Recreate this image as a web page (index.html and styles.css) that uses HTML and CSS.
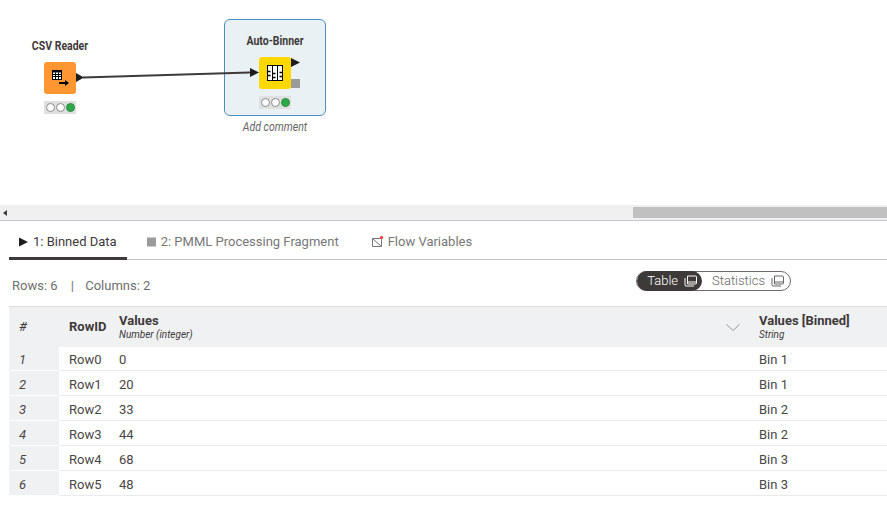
FILE: index.html
```html
<!doctype html>
<html>
<head>
	<title>Auto-Binner</title>
	<link rel="stylesheet" href="styles.css">
</head>
<body>
	<div class="canvas">
		<!-- connector between the two nodes -->
		<svg class="wire" width="887" height="205">
			<path d="M83 77.5 L250 72.5" stroke="#3e3a39" stroke-width="2" fill="none"/>
			<path d="M76 73 L84 77.5 L76 82 Z" fill="#1f1d1c"/>
			<path d="M250 68 L259 72.5 L250 77 Z" fill="#1f1d1c"/>
		</svg>

		<div class="node-label reader-label">CSV Reader</div>
		<div class="node-icon reader-icon">
			<svg width="32" height="32" viewBox="0 0 32 32">
				<rect x="8.5" y="8.5" width="9" height="9" fill="#fff" stroke="#000"/>
				<path d="M8 9.5H18" stroke="#000" stroke-width="2"/>
				<path d="M8.5 12.5H17.5M8.5 14.5H17.5M11.5 10.5V17.5M14.5 10.5V17.5" stroke="#000" fill="none"/>
				<path d="M15 21H22" stroke="#000" stroke-width="2"/>
				<path d="M21 18L25 21L21 24Z" fill="#000"/>
			</svg>
		</div>
		<div class="lights reader-lights"><i></i><i></i><i class="on"></i></div>

		<div class="selected-box"></div>
		<div class="node-label binner-label">Auto-Binner</div>
		<div class="node-icon binner-icon">
			<svg width="32" height="32" viewBox="0 0 32 32">
				<rect x="8" y="8" width="16" height="16" fill="#000"/>
				<path d="M9 9H13V23H9ZM14 9H18V23H14ZM19 9H23V23H19Z" fill="#fff"/>
				<path d="M9 14.5H11.5M9 18.5H11.5M14 16.5H16.5M14 20.5H16.5M20.5 15.5H23M20.5 19.5H23" stroke="#000" stroke-width="1.4" fill="none"/>
			</svg>
		</div>
		<svg class="binner-ports" width="12" height="32" viewBox="0 0 12 32">
			<path d="M1 1L10 5.5L1 10Z" fill="#1f1d1c"/>
			<rect x="1" y="22" width="9" height="9" fill="#9b9b9b"/>
		</svg>
		<div class="lights binner-lights"><i></i><i></i><i class="on"></i></div>
		<div class="add-comment">Add comment</div>
	</div>

	<div class="scrollbar">
		<span class="scroll-arrow"></span>
		<span class="scroll-thumb"></span>
	</div>

	<div class="tabs">
		<div class="tab active">
			<svg width="10" height="10" viewBox="0 0 10 10"><path d="M0 0.5L9 5L0 9.5Z" fill="#1f1d1c"/></svg>
			1: Binned Data
		</div>
		<div class="tab">
			<svg width="10" height="10" viewBox="0 0 10 10"><rect x="0" y="0.5" width="9" height="9" fill="#9b9b9b"/></svg>
			2: PMML Processing Fragment
		</div>
		<div class="tab tab-vars">
			<svg width="13" height="13" viewBox="0 0 13 13">
				<path d="M1.5 3.5H10.5V11.5H1.5Z" fill="none" stroke="#777" />
				<path d="M2 4L10 11" stroke="#777" fill="none"/>
				<circle cx="10.5" cy="2.5" r="1.7" fill="#ff4b4b"/>
			</svg>
			Flow Variables
		</div>
	</div>

	<div class="toolbar">
		<div class="counts">Rows: 6 <span class="sep">|</span> Columns: 2</div>
		<div class="toggle">
			<div class="toggle-item current">Table
				<svg width="13" height="12" viewBox="0 0 13 12"><path d="M3.5 1H11.5A1 1 0 0 1 12.5 2V8A1 1 0 0 1 11.5 9H3.5V1ZM1 3V10A1 1 0 0 0 2 11H10" fill="none" stroke="#fff"/><path d="M3.5 7H12.5" stroke="#fff"/></svg>
			</div>
			<div class="toggle-item">Statistics
				<svg width="13" height="12" viewBox="0 0 13 12"><path d="M3.5 1H11.5A1 1 0 0 1 12.5 2V8A1 1 0 0 1 11.5 9H3.5V1ZM1 3V10A1 1 0 0 0 2 11H10" fill="none" stroke="#666"/><path d="M3.5 7H12.5" stroke="#666"/></svg>
			</div>
		</div>
	</div>

	<table class="data">
		<colgroup>
			<col class="col-index"><col class="col-id"><col class="col-values"><col>
		</colgroup>
		<thead>
			<tr>
				<th class="index">#</th>
				<th class="plain">RowID</th>
				<th>
					<div class="head-cell">
						<div>Values<small>Number (integer)</small></div>
						<svg width="14" height="8" viewBox="0 0 14 8"><path d="M0.5 0.5L7 6.5L13.5 0.5" fill="none" stroke="#999"/></svg>
					</div>
				</th>
				<th>Values [Binned]<small>String</small></th>
			</tr>
		</thead>
		<tbody>
			<tr><td class="index">1</td><td>Row0</td><td>0</td><td>Bin 1</td></tr>
			<tr><td class="index">2</td><td>Row1</td><td>20</td><td>Bin 1</td></tr>
			<tr><td class="index">3</td><td>Row2</td><td>33</td><td>Bin 2</td></tr>
			<tr><td class="index">4</td><td>Row3</td><td>44</td><td>Bin 2</td></tr>
			<tr><td class="index">5</td><td>Row4</td><td>68</td><td>Bin 3</td></tr>
			<tr><td class="index">6</td><td>Row5</td><td>48</td><td>Bin 3</td></tr>
		</tbody>
	</table>
</body>
</html>
```

FILE: styles.css
```css
html, body {
	margin: 0;
	padding: 0;
	height: 518px;
	overflow: hidden;
}

body {
	background-color: #fff;
	color: #4a4645;
	font-family: Roboto, sans-serif;
	font-size: 13px;
}

/* workflow canvas, nodes sit at free coordinates */
.canvas {
	position: relative;
	height: 205px;
}

.wire {
	position: absolute;
	left: 0;
	top: 0;
	z-index: 2;
}

.selected-box {
	position: absolute;
	left: 224px;
	top: 19px;
	width: 100px;
	height: 95px;
	background-color: #e9f1f5;
	border: 1px solid #4a90bf;
	border-radius: 6px;
}

.node-label {
	position: absolute;
	width: 100px;
	text-align: center;
	font-size: 12px;
	font-weight: 700;
	line-height: 14px;
	color: #3e3a39;
	transform: scaleX(0.875);
}

.reader-label { left: 10px; top: 39px; }
.binner-label { left: 225px; top: 34px; }

.node-icon {
	position: absolute;
	width: 32px;
	height: 32px;
	border-radius: 3px;
}

.reader-icon { left: 44px; top: 62px; background-color: #ff9632; }
.binner-icon { left: 259px; top: 57px; background-color: #ffd800; }

.binner-ports {
	position: absolute;
	left: 290px;
	top: 57px;
}

.lights {
	position: absolute;
	display: flex;
	gap: 1px;
	align-items: center;
	justify-content: center;
	width: 32px;
	height: 13px;
	background-color: #dfe0e0;
}

.lights i {
	display: block;
	box-sizing: border-box;
	width: 9px;
	height: 9px;
	border-radius: 50%;
	background-color: #fff;
	border: 1px solid #8a8a8a;
}

.lights i.on {
	background-color: #2fa84a;
	border-color: #2a8f42;
}

.reader-lights { left: 44px; top: 101px; }
.binner-lights { left: 259px; top: 96px; }

.add-comment {
	position: absolute;
	left: 225px;
	top: 120px;
	width: 100px;
	text-align: center;
	font-size: 12px;
	font-style: italic;
	line-height: 14px;
	color: #666;
	transform: scaleX(0.88);
}

/* scrollbar under the canvas */
.scrollbar {
	display: flex;
	justify-content: space-between;
	align-items: center;
	box-sizing: border-box;
	height: 16px;
	background-color: #f0f0f0;
	border-bottom: 1px solid #c4c6ca;
}

.scroll-arrow {
	width: 0;
	height: 0;
	margin-left: 3px;
	border-style: solid;
	border-width: 3.5px 4px 3.5px 0;
	border-color: transparent #3e3a39 transparent transparent;
}

.scroll-thumb {
	width: 254px;
	height: 11px;
	margin-bottom: 1px;
	background-color: #c0c0c0;
}

.tabs {
	display: flex;
	height: 38px;
	margin-left: 9px;
	border-bottom: 1px solid #c4c4c4;
}

.tab {
	display: flex;
	align-items: center;
	gap: 4px;
	box-sizing: border-box;
	height: 39px;
	padding: 2px 10px 0;
	margin-right: 10px;
	color: #777;
	font-size: 13px;
}

.tab.active {
	color: #3e3a39;
	border-bottom: 3px solid #3e3a39;
	padding-top: 5px;
}

.tab-vars {
	margin-left: 2px;
}

.toolbar {
	display: flex;
	justify-content: space-between;
	align-items: center;
	height: 46px;
	padding-left: 12px;
	padding-right: 96px;
}

.counts {
	color: #6e6e6e;
	font-size: 13px;
	margin-top: 5px;
}

.counts .sep {
	margin: 0 8px 0 10px;
}

.toggle {
	display: flex;
	box-sizing: border-box;
	height: 20px;
	margin-top: -5px;
	border: 1px solid #6e6a69;
	border-radius: 10px;
	color: #666;
	font-size: 13px;
	font-weight: 300;
}

.toggle-item {
	display: flex;
	align-items: center;
	gap: 6px;
	padding: 0 6px 0 10px;
	border-radius: 10px;
}

.toggle-item.current {
	background-color: #3e3a39;
	color: #fff;
	margin: -1px 0 -1px 0;
	padding-right: 5px;
}

.data {
	width: 878px;
	margin-left: 9px;
	border-collapse: separate;
	border-spacing: 0;
	table-layout: fixed;
	font-size: 13px;
}

.col-index, .col-id { width: 50px; }
.col-values { width: 640px; }

.data th {
	box-sizing: border-box;
	height: 41px;
	padding: 0 0 0 10px;
	text-align: left;
	font-weight: 700;
	color: #3e3a39;
	background-color: #f0f1f3;
	border-top: 1px solid #dcdcdc;
	line-height: 13px;
}

.data th small {
	display: block;
	margin-top: 1px;
	font-size: 10px;
	font-style: italic;
	font-weight: 400;
	line-height: 13px;
}

.data th.index {
	font-weight: 400;
	font-style: italic;
	padding-bottom: 2px;
}

.data th.plain {
	padding-bottom: 2px;
}

.head-cell {
	display: flex;
	justify-content: space-between;
	align-items: center;
	padding-right: 9px;
}

.head-cell svg {
	margin-top: 2px;
}

.data td {
	box-sizing: border-box;
	height: 25px;
	padding: 3px 0 0 10px;
	border-bottom: 1px solid #e9ebed;
}

.data tbody tr:first-child td {
	height: 24px;
	padding-top: 2px;
}

.data td.index {
	font-style: italic;
	background-color: #f0f1f3;
	border-bottom-color: #fff;
}
```
